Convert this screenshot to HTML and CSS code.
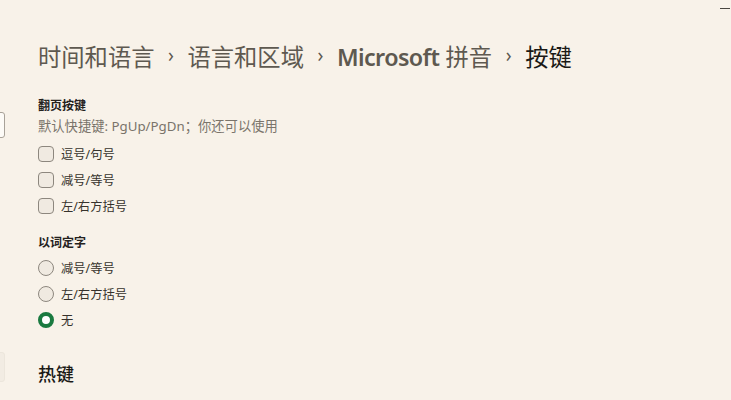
FILE: index.html
```html
<!DOCTYPE html>
<html lang="zh-CN">
<head>
<meta charset="utf-8">
<title>按键</title>
<link rel="stylesheet" href="styles.css">
</head>
<body>
<div class="edge-tab edge-tab-top"></div>
<div class="edge-tab edge-tab-bottom"></div>
<div class="min-btn"></div>
<main class="page">
  <h1 class="crumbs">
    <span class="crumb">时间和语言</span>
    <span class="sep">›</span>
    <span class="crumb">语言和区域</span>
    <span class="sep">›</span>
    <span class="crumb"><span class="latin">Microsoft</span> 拼音</span>
    <span class="sep">›</span>
    <span class="crumb current">按键</span>
  </h1>

  <section class="group">
    <div class="group-title">翻页按键</div>
    <div class="group-desc">默认快捷键: PgUp/PgDn；你还可以使用</div>
    <ul class="options">
      <li class="option"><span class="check"></span><span class="label">逗号/句号</span></li>
      <li class="option"><span class="check"></span><span class="label">减号/等号</span></li>
      <li class="option"><span class="check"></span><span class="label">左/右方括号</span></li>
    </ul>
  </section>

  <section class="group group-second">
    <div class="group-title">以词定字</div>
    <ul class="options radios">
      <li class="option"><span class="radio"></span><span class="label">减号/等号</span></li>
      <li class="option"><span class="radio"></span><span class="label">左/右方括号</span></li>
      <li class="option"><span class="radio on"></span><span class="label">无</span></li>
    </ul>
  </section>

  <h2 class="section-head">热键</h2>
</main>
</body>
</html>
```

FILE: styles.css
```css
html, body {
  margin: 0;
  padding: 0;
  background: #f8f2e9;
  overflow: hidden;
}
body {
  width: 731px;
  height: 400px;
  position: relative;
  font-family: "Noto Sans", "Noto Sans CJK SC", sans-serif;
  color: #1f1c18;
}
.page {
  padding: 41px 0 0 38px;
}
.crumbs {
  margin: 0;
  display: flex;
  align-items: center;
  height: 32px;
  font-size: 23.3px;
  font-weight: 400;
  color: #5e5950;
  white-space: nowrap;
}
.crumb {
  line-height: 32px;
}
.latin {
  font-weight: 600;
  letter-spacing: -0.6px;
}
.sep {
  font-size: 19px;
  width: 33px;
  text-align: center;
  color: #5e5950;
  position: relative;
  top: -2px;
}
.crumb.current {
  color: #1b1915;
}
.group {
  margin-top: 23px;
}
.group-second {
  margin-top: 14px;
}
.group-title {
  font-size: 12px;
  line-height: 20px;
  font-weight: 600;
  color: #25221d;
}
.group-desc {
  font-size: 13.3px;
  line-height: 20px;
  color: #7a746b;
}
.options {
  list-style: none;
  margin: 5px 0 0 0;
  padding: 0;
}
.radios {
  margin-top: 2px;
}
.option {
  height: 26px;
  display: flex;
  align-items: center;
  gap: 7px;
}
.label {
  font-size: 12.3px;
  color: #36322c;
}
.check {
  box-sizing: border-box;
  width: 16px;
  height: 16px;
  border: 1px solid #8d877e;
  border-radius: 4px;
  background: #f0eae1;
}
.radio {
  box-sizing: border-box;
  width: 16px;
  height: 16px;
  border: 1px solid #8d877e;
  border-radius: 50%;
  background: #f0eae1;
}
.radio.on {
  border: 4.5px solid #1a7a40;
  background: #ffffff;
}
.section-head {
  margin: 27px 0 0 0;
  font-size: 18px;
  line-height: 28px;
  font-weight: 500;
  color: #1b1915;
}
.edge-tab {
  position: absolute;
  left: -4px;
  width: 9px;
  box-sizing: border-box;
  border-radius: 3px;
}
.edge-tab-top {
  top: 112px;
  height: 26px;
  background: #fdfbf7;
  border: 1px solid #a8a299;
}
.edge-tab-bottom {
  top: 352px;
  height: 30px;
  background: #f2ece3;
  border: 1px solid #ece6dc;
}
.min-btn {
  position: absolute;
  top: 8px;
  left: 720px;
  width: 10px;
  height: 1px;
  background: #4a4640;
}
```
